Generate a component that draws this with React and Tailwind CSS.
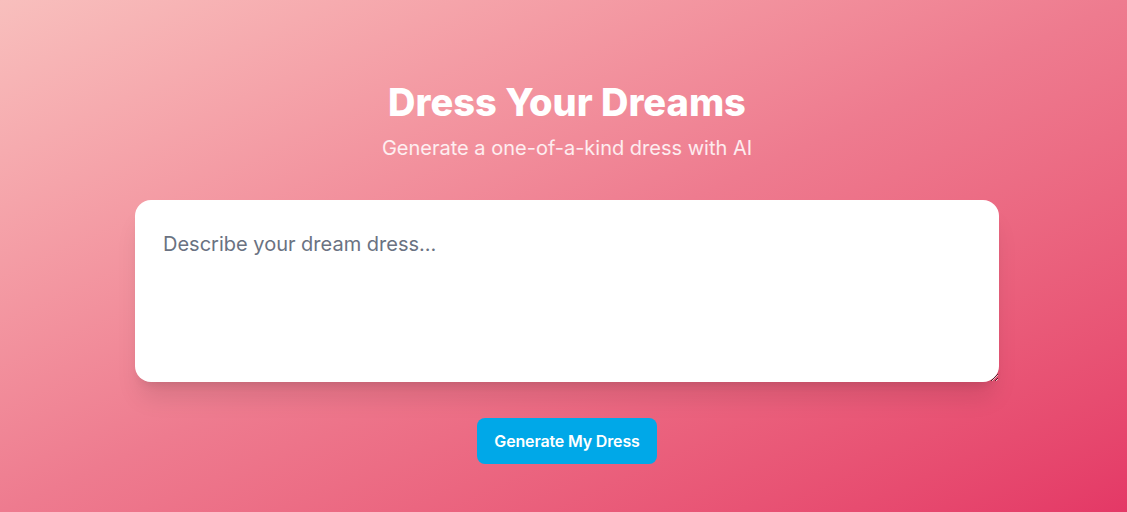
import React from 'react';

export default function App() {
  return (
    <div className="min-h-[512px] w-full bg-gradient-to-br from-[#f8bfbd] via-[#ee7b8f] to-[#e43866] font-['Inter',sans-serif]">
      <div className="flex flex-col items-center pt-[82px] pl-[7px]">
        <h1 className="text-[38px] font-extrabold leading-10 text-white">Dress Your Dreams</h1>
        <p className="mt-3 text-xl leading-7 text-white/85">Generate a one-of-a-kind dress with AI</p>

        <textarea
          className="mt-[38px] h-[182px] w-[864px] rounded-2xl bg-white px-7 pt-[30px] pb-7 text-xl leading-7 text-gray-800 shadow-xl outline-none placeholder:text-gray-500"
          placeholder="Describe your dream dress..."
        />

        <button className="mt-9 w-[180px] rounded-lg bg-[#00a8e8] py-[11px] text-base font-semibold leading-6 tracking-[-0.01em] text-white">
          Generate My Dress
        </button>
      </div>
    </div>
  );
}
